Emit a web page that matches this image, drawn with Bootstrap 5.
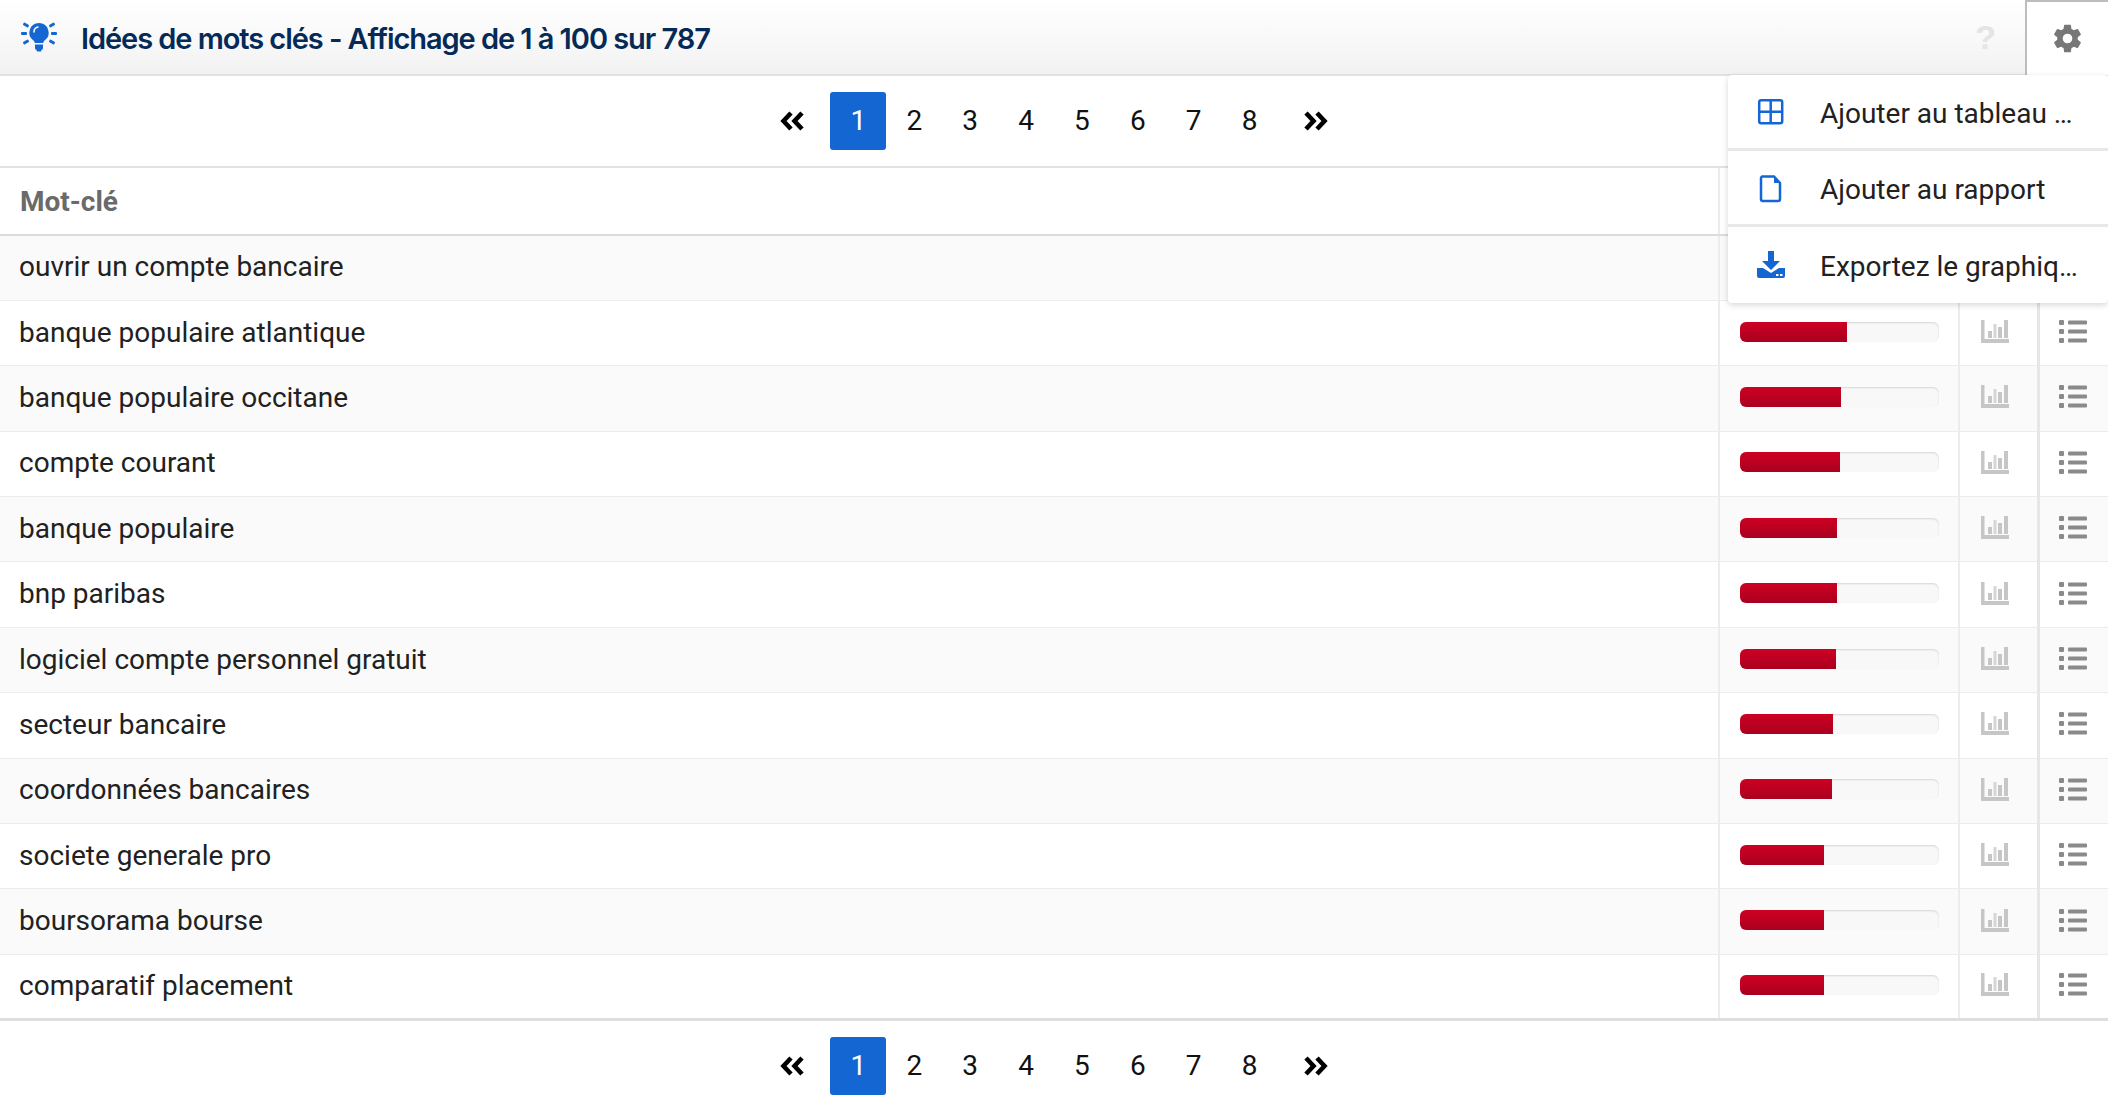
<!DOCTYPE html>
<html lang="fr"><head><meta charset="utf-8"><title>Idées de mots clés</title>
<link href="https://cdn.jsdelivr.net/npm/bootstrap@5.3.0/dist/css/bootstrap.min.css" rel="stylesheet">
<style>
html,body{height:100%;overflow:hidden}
body{font-family:Roboto,sans-serif;font-size:28px;color:#212121;background:#fff}
.app-shell{position:relative;width:2108px;height:1108px}
.top-bar{height:76px;background:linear-gradient(#fff,#f2f2f2);border-bottom:2px solid #e2e2e2}
.bulb{width:36px;height:32px;margin:2px 24px 0 21px}
.top-title{font-family:Inter,sans-serif;font-weight:600;font-size:29px;letter-spacing:-1.06px;color:#052a57;padding-top:3px}
.help-mark{font-family:"Liberation Sans",sans-serif;font-weight:700;font-size:34px;color:#e4e4e4;margin-right:29px}
.gear-box{width:83px;height:75px;background:#fff;border-left:2px solid #bdbdbd;border-top:2px solid #bdbdbd}
.pager-wrap{height:90px}
.pager-wrap.pager-low{height:88px;padding-top:2px}
.pager-wrap .pagination{--bs-pagination-border-width:0;--bs-pagination-bg:transparent;--bs-pagination-color:#111;--bs-pagination-active-bg:#1467d3;--bs-pagination-padding-x:0;--bs-pagination-padding-y:0;--bs-pagination-font-size:28px;margin:0}
.pager-wrap .page-link{width:55.9px;height:58px;margin-left:0!important;display:flex;align-items:center;justify-content:center;border-radius:3px!important}
.pager-wrap .page-edge{width:76px}
.kw-table{table-layout:fixed;width:2108px;margin:0;--bs-table-striped-bg:#fafafa;--bs-table-striped-color:#212121;--bs-table-color:#212121;--bs-table-border-color:#ececec}
.kw-table th,.kw-table td{padding:0 0 3px;vertical-align:middle;border-bottom:1px solid #ececec}
.kw-table thead tr{height:68px}
.kw-table thead th{border-top:2px solid #e2e2e2;border-bottom:2px solid #dcdcdc;box-shadow:0 2px 3px rgba(0,0,0,.06);font-weight:700;color:#6a6a6a;padding:2px 0 0 20px;font-size:28px}
.kw-table tbody tr{height:65.4px}
.kw-table td.kw-name{padding:1px 0 2px 19px}
.kw-table .line-l{border-left:2px solid #ececec}
.kw-table .line-thick{border-left:3px solid #e6e6e6}
.kw-table tbody tr:last-child td{border-bottom:3px solid #dedede}
.vol-track{width:199px;height:20px;margin-left:20px;background:#f8f8f8;border-radius:6px;box-shadow:inset 0 1px 2px rgba(0,0,0,.14);overflow:hidden}
.vol-fill{height:100%;background:linear-gradient(#cf0022,#a90020)}
.float-menu{position:absolute;left:1728px;top:75px;width:380px;background:#fff;border-radius:4px;box-shadow:0 2px 6px rgba(0,0,0,.16);z-index:5}
.float-menu .list-group-item{height:76px;border:0;border-bottom:3px solid #e8e8e8;padding:0;font-size:28px;color:#212121;background:transparent;border-radius:0}
.float-menu .list-group-item:last-child{border-bottom:0}
.menu-ico{width:34px;height:34px;margin:0 32px 0 26px;flex:none}
.text-cut{white-space:nowrap;padding-top:4px}
.ic-chart{width:28px;height:23px;display:block;margin-left:21px}
.ic-list{width:28px;height:23px;display:block;margin-left:19px}
</style></head><body>
<div class="app-shell">
 <div class="top-bar d-flex align-items-center">
  <svg class="bulb" viewBox="0 0 36 32"><g fill="#1467d3"><path d="M18 1a9.600 9.600 0 0 0-5.600 17.400c.9.700 1.300 1.600 1.400 2.600h8.400c.1-1 .5-1.900 1.400-2.600A9.600 9.600 0 0 0 18 1z"/><path d="M14 22.500h8v3.500a2 2 0 0 1-1.500 2L20 29.500h-4l-.5-1.500a2 2 0 0 1-1.500-2z"/><rect x="0" y="10" width="6" height="3" rx="1"/><rect x="30" y="10" width="6" height="3" rx="1"/><rect x="2" y="1.500" width="6" height="3" rx="1" transform="rotate(30 5 3)"/><rect x="28" y="1.500" width="6" height="3" rx="1" transform="rotate(-30 31 3)"/><rect x="2" y="18.500" width="6" height="3" rx="1" transform="rotate(-30 5 20)"/><rect x="28" y="18.500" width="6" height="3" rx="1" transform="rotate(30 31 20)"/></g><path d="M13 10a5 5 0 0 1 4-5" fill="none" stroke="#fff" stroke-width="1.500" stroke-linecap="round"/></svg>
  <div class="top-title">Idées de mots clés - Affichage de 1 à 100 sur 787</div>
  <div class="help-mark ms-auto">?</div>
  <div class="gear-box d-flex align-items-center justify-content-center">
   <svg width="33" height="33" viewBox="0 0 24 24"><path fill="#777" d="M19.430 12.980a7.800 7.800 0 0 0 0-1.960l2.110-1.650a.5.5 0 0 0 .12-.64l-2-3.460a.5.5 0 0 0-.61-.22l-2.490 1a7.300 7.300 0 0 0-1.690-.98l-.38-2.650A.49.49 0 0 0 14 2h-4a.49.49 0 0 0-.49.420l-.38 2.650a7.700 7.700 0 0 0-1.690.98l-2.490-1a.5.5 0 0 0-.61.220l-2 3.460a.49.49 0 0 0 .12.640l2.110 1.650a7.900 7.900 0 0 0 0 1.960l-2.110 1.650a.5.5 0 0 0-.12.640l2 3.460c.12.220.39.300.61.220l2.490-1c.52.400 1.080.730 1.690.98l.38 2.650c.03.240.24.420.49.420h4c.25 0 .46-.18.49-.42l.38-2.650a7.700 7.700 0 0 0 1.690-.98l2.490 1c.23.090.49 0 .61-.22l2-3.460a.5.5 0 0 0-.12-.64zM12 15.500a3.500 3.500 0 1 1 0-7 3.500 3.500 0 0 1 0 7z"/></svg>
  </div>
 </div>

 <div class="pager-wrap d-flex align-items-center justify-content-center" id="pagerTop"></div>

 <table class="table table-striped kw-table">
  <colgroup><col style="width:1719px"><col style="width:240px"><col style="width:79px"><col style="width:70px"></colgroup>
  <thead><tr><th>Mot-clé</th><th class="line-l"></th><th></th><th></th></tr></thead>
  <tbody id="kwBody"></tbody>
 </table>

 <div class="pager-wrap pager-low d-flex align-items-center justify-content-center" id="pagerLow"></div>

 <div class="float-menu list-group">
  <div class="list-group-item d-flex align-items-center"><svg class="menu-ico" viewBox="0 0 34 34"><g fill="none" stroke="#1467d3" stroke-width="2.500"><rect x="5.200" y="5.200" width="23" height="23" rx="2"/><path d="M16.700 5v23M5 16.700h23"/></g></svg><span class="text-cut">Ajouter au tableau …</span></div>
  <div class="list-group-item d-flex align-items-center"><svg class="menu-ico" viewBox="0 0 34 34"><path d="M8 5.500h12l6 6.500v16a2 2 0 0 1-2 2H9a2 2 0 0 1-2-2V7a2 2 0 0 1 1-1.500z" fill="none" stroke="#1467d3" stroke-width="2.500"/><path d="M20 5v7h6z" fill="#1467d3"/></svg><span class="text-cut">Ajouter au rapport</span></div>
  <div class="list-group-item d-flex align-items-center"><svg class="menu-ico" viewBox="0 0 34 34"><g fill="#1467d3"><path d="M14 3h6v10h6l-9 9-9-9h6z"/><path d="M3 20h6l8 5 8-5h6v8a2 2 0 0 1-2 2H5a2 2 0 0 1-2-2z"/></g><rect x="22" y="26" width="2.500" height="2" fill="#fff"/><rect x="26" y="26" width="2.500" height="2" fill="#fff"/></svg><span class="text-cut">Exportez le graphiq…</span></div>
 </div>
</div>
<script>
const dbl=(d)=>`<svg width="25" height="20" viewBox="0 0 25 20"><path d="${d}" fill="none" stroke="#000" stroke-width="4.600" stroke-linejoin="miter"/></svg>`;
const pager=`<ul class="pagination"><li class="page-item"><a class="page-link page-edge" href="#">${dbl('M11 2 3.500 10l7.500 8M22 2l-7.500 8 7.500 8')}</a></li><li class="page-item active"><a class="page-link" href="#">1</a></li>`+[2,3,4,5,6,7,8].map(n=>`<li class="page-item"><a class="page-link" href="#">${n}</a></li>`).join('')+`<li class="page-item"><a class="page-link page-edge" href="#">${dbl('M3 2l7.500 8-7.500 8M14 2l7.500 8-7.500 8')}</a></li></ul>`;
document.getElementById('pagerTop').innerHTML=pager;document.getElementById('pagerLow').innerHTML=pager;
const rows=[["ouvrir un compte bancaire",115],["banque populaire atlantique",107],["banque populaire occitane",101],["compte courant",100],["banque populaire",97],["bnp paribas",97],["logiciel compte personnel gratuit",96],["secteur bancaire",93],["coordonnées bancaires",92],["societe generale pro",84],["boursorama bourse",84],["comparatif placement",84]];
const chart=`<svg class="ic-chart" viewBox="0 0 28 23"><g fill="#c6c6c6"><path d="M0 0h3.500v19H28v4H0z"/><rect x="7" y="11" width="4" height="7"/><rect x="12.500" y="4" width="3" height="14" fill="#d6d6d6"/><rect x="17" y="7" width="4" height="11"/><rect x="23" y="0" width="4" height="18"/></g></svg>`;
const list=`<svg class="ic-list" viewBox="0 0 28 23"><g fill="#8a8a8a"><rect x="0" y="0" width="5" height="5" rx="1"/><rect x="0" y="9" width="5" height="5" rx="1"/><rect x="0" y="18" width="5" height="5" rx="1"/><rect x="9" y="0.500" width="19" height="4" rx="1"/><rect x="9" y="9.500" width="19" height="4" rx="1"/><rect x="9" y="18.500" width="19" height="4" rx="1"/></g></svg>`;
document.getElementById('kwBody').innerHTML=rows.map(([t,w])=>`<tr><td class="kw-name">${t}</td><td class="line-l"><div class="vol-track"><div class="vol-fill" style="width:${w}px"></div></div></td><td class="line-l">${chart}</td><td class="line-thick">${list}</td></tr>`).join('');
</script>
<script src="https://cdn.jsdelivr.net/npm/bootstrap@5.3.0/dist/js/bootstrap.bundle.min.js"></script>
</body></html>
